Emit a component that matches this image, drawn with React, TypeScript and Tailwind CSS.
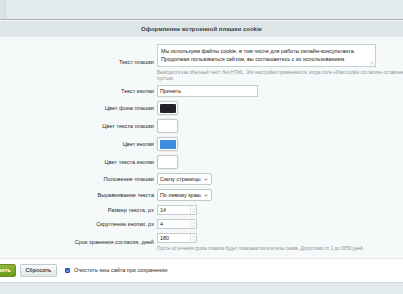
const Label = ({ children }: { children: React.ReactNode }) => (
  <div className="w-[157px] shrink-0 pr-[3px] text-right text-[5.6px] text-[#2b2b2b] leading-[7px]">{children}</div>
)

const Row = ({ label, children }: { label: string; children: React.ReactNode }) => (
  <div className="flex items-center">
    <Label>{label}</Label>
    <div className="flex flex-col">{children}</div>
  </div>
)

const Swatch = ({ color }: { color: string }) => (
  <div className="w-[21px] h-[14px] rounded-[2px] border border-[#c4c9cb] bg-white p-[1.5px] shadow-[0_0_0_0.5px_#e3e7e8]">
    <div className={`w-full h-full rounded-[1px] ${color}`} />
  </div>
)

const Select = ({ value }: { value: string }) => (
  <div className="w-[55px] h-[12px] rounded-[2px] border border-[#c2c7c9] bg-white flex items-center justify-between pl-[2px] pr-[3px] text-[5.4px] text-[#222]">
    <span>{value}</span>
    <svg width="4" height="3" viewBox="0 0 4 3">
      <path d="M0.5 0.7 L2 2.2 L3.5 0.7" fill="none" stroke="#444" strokeWidth="0.7" />
    </svg>
  </div>
)

const NumberInput = ({ value }: { value: string }) => (
  <div className="w-[40px] h-[10px] border border-[#c6cbcd] bg-white flex items-center justify-between pl-[2px] text-[5.4px] text-[#222]">
    <span>{value}</span>
    <div className="h-full w-[6px] border-l border-[#e1e4e5] flex items-center justify-center">
      <svg width="4" height="7" viewBox="0 0 4 7">
        <path d="M0.8 2.6 L2 1.3 L3.2 2.6" fill="none" stroke="#9a9ea0" strokeWidth="0.5" />
        <path d="M0.8 4.4 L2 5.7 L3.2 4.4" fill="none" stroke="#9a9ea0" strokeWidth="0.5" />
      </svg>
    </div>
  </div>
)

export default function App() {
  return (
    <div className="w-[403px] h-[294px] overflow-hidden bg-[#e4ebed] font-['Liberation_Sans',Arial,sans-serif]">
      {/* top strip */}
      <div className="h-[19px] flex">
        <div className="w-[6px] h-full bg-[#dde4e6] border-r border-[#cfd6d8]" />
      </div>
      <div className="h-[1px] bg-[#a8b2b5]" />
      <div className="h-[1px] bg-[#f4f7f8]" />
      <div className="h-[16px] bg-[#dfe6e8] flex items-center justify-center text-[6px] font-bold text-[#3a3f41]">
        Оформление встроенной плашки cookie
      </div>

      {/* form body */}
      <div className="h-[221px] bg-[#f5f9f9] pt-[7px] flex flex-col gap-[4px]">
        <Row label="Текст плашки">
          <div className="relative w-[219px] h-[23px] border border-[#c8cdcf] bg-white px-[3px] pt-[2px] text-[5.4px] leading-[8px] text-[#222]">
            Мы используем файлы cookie, в том числе для работы онлайн-консультанта.
            <br />
            Продолжая пользоваться сайтом, вы соглашаетесь с их использованием
            <svg className="absolute right-[1px] bottom-[1px]" width="5" height="5" viewBox="0 0 5 5">
              <path d="M1 4.5 L4.5 1 M2.5 4.5 L4.5 2.5 M4 4.5 L4.5 4" stroke="#9aa0a2" strokeWidth="0.5" />
            </svg>
          </div>
          <div className="mt-[3px] text-[4.6px] leading-[5.5px] text-[#8e9496] whitespace-nowrap">
            Выводится как обычный текст без HTML. Эти настройки применяются, когда поле «Имя cookie согласия» оставлено
            <br />
            пустым.
          </div>
        </Row>

        <Row label="Текст кнопки">
          <div className="w-[101px] h-[12px] border border-[#c6cbcd] bg-white flex items-center pl-[2px] text-[5.4px] text-[#222]">
            Принять
          </div>
        </Row>

        <Row label="Цвет фона плашки">
          <Swatch color="bg-[#222326]" />
        </Row>
        <Row label="Цвет текста плашки">
          <Swatch color="bg-white" />
        </Row>
        <Row label="Цвет кнопки">
          <Swatch color="bg-[#3c8de0]" />
        </Row>
        <Row label="Цвет текста кнопки">
          <Swatch color="bg-white" />
        </Row>

        <Row label="Положение плашки">
          <Select value="Снизу страницы" />
        </Row>
        <Row label="Выравнивание текста">
          <Select value="По левому краю" />
        </Row>

        <Row label="Размер текста, px">
          <NumberInput value="14" />
        </Row>
        <Row label="Скругление кнопки, px">
          <NumberInput value="4" />
        </Row>
        <Row label="Срок хранения согласия, дней">
          <NumberInput value="180" />
          <div className="mt-[3px] text-[4.6px] leading-[5.5px] text-[#8e9496] whitespace-nowrap">
            После истечения срока плашка будет показана посетителю снова. Допустимо от 1 до 3650 дней.
          </div>
        </Row>
      </div>

      {/* footer */}
      <div className="h-[25px] border-t border-[#e3e9ea] bg-white flex items-center border-b border-b-[#d5dcde]">
        <div className="ml-[-24px] h-[13px] px-[4px] rounded-[2px] bg-gradient-to-b from-[#8fb63a] to-[#6e9a1f] border border-[#6a8f22] flex items-center text-[5.6px] font-bold text-white">
          Сохранить
        </div>
        <div className="ml-[4px] h-[13px] w-[37px] rounded-[2px] bg-gradient-to-b from-[#fbfcfc] to-[#dfe6e8] border border-[#c3cbce] flex items-center justify-center text-[5.4px] font-bold text-[#3d4446]">
          Сбросить
        </div>
        <div className="ml-[8px] w-[5px] h-[5px] rounded-[1px] bg-[#2f6fce] border border-[#23559f] flex items-center justify-center">
          <svg width="4" height="4" viewBox="0 0 4 4">
            <path d="M0.7 2 L1.6 3 L3.3 0.9" fill="none" stroke="#fff" strokeWidth="0.7" />
          </svg>
        </div>
        <div className="ml-[4px] text-[5.5px] text-[#2b2b2b]">Очистить кеш сайта при сохранении</div>
      </div>
    </div>
  )
}
